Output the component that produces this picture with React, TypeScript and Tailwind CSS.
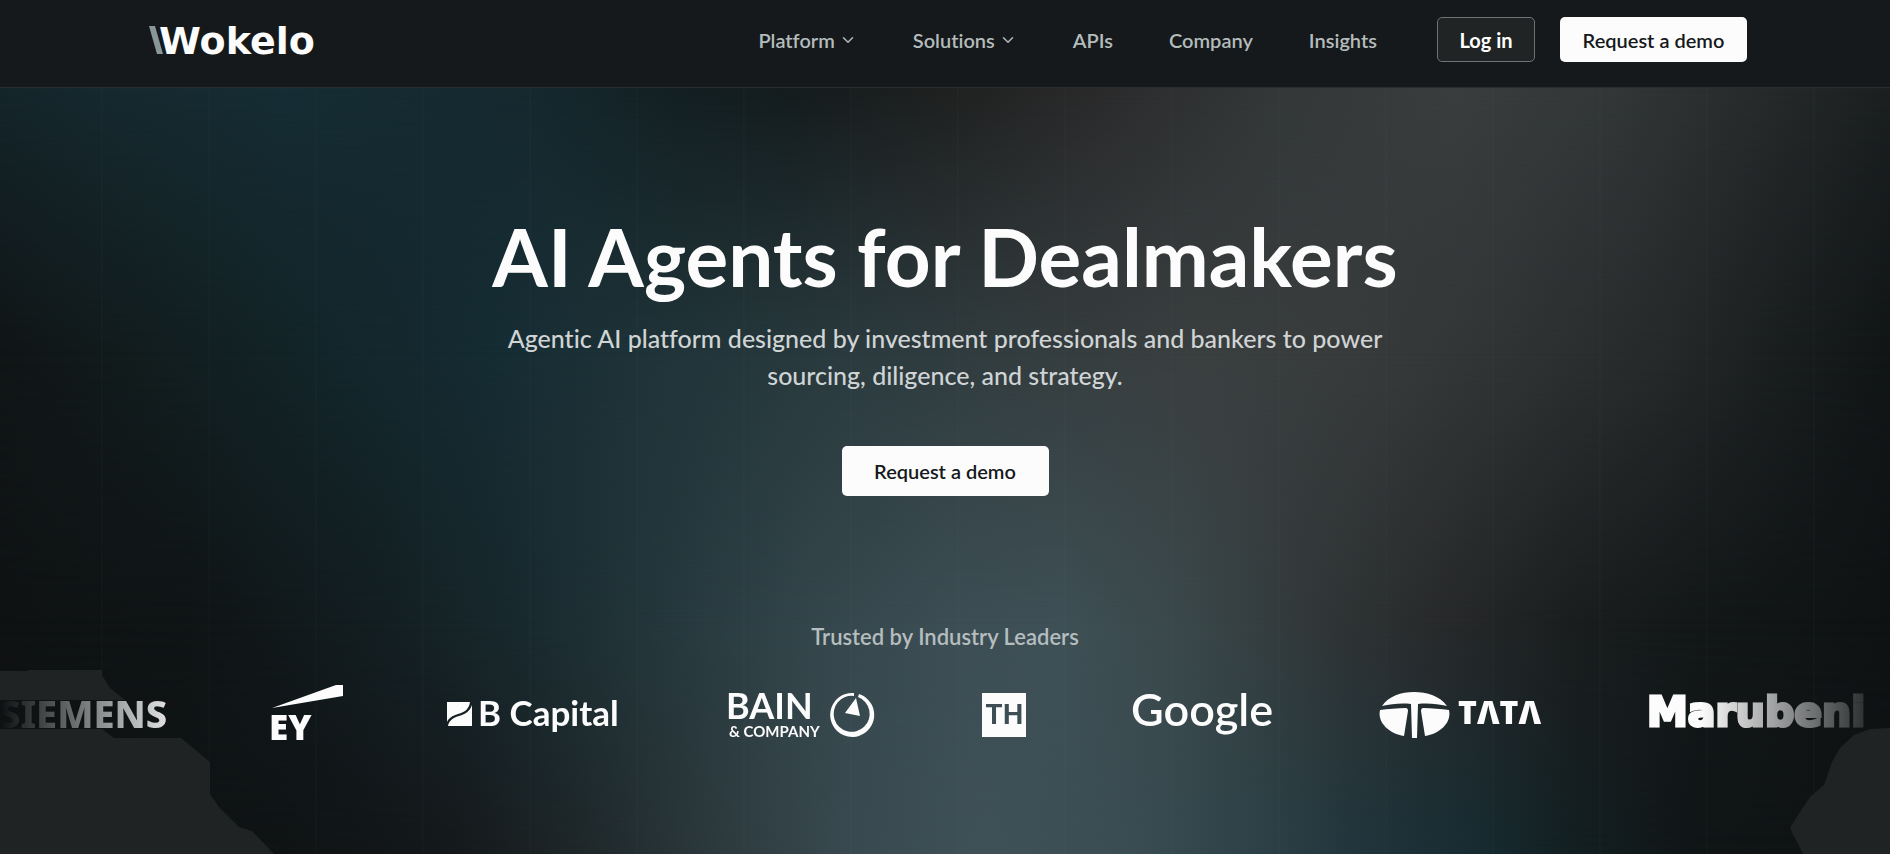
import type { ReactNode } from 'react';
import { ChevronDown } from 'lucide-react';

const navItems = [
  { label: 'Platform', hasMenu: true },
  { label: 'Solutions', hasMenu: true },
  { label: 'APIs', hasMenu: false },
  { label: 'Company', hasMenu: false },
  { label: 'Insights', hasMenu: false },
];

function WokeloLogo() {
  return (
    <svg className="h-10 w-[172px] overflow-visible" viewBox="0 0 172 40" role="img" aria-label="Wokelo">
      <path d="M0 6h6l8 28H8z" fill="#8a9799" />
      <text x="10" y="34" fontFamily="'DejaVu Sans', sans-serif" fontWeight="700" fontSize="38" fill="#fcfcfc">
        Wokelo
      </text>
    </svg>
  );
}

function Header() {
  return (
    <header className="relative z-10 border-b border-[#2a2c2d] bg-[#15191b]">
      <div className="mx-auto flex h-[87px] max-w-[1604px] items-start justify-between pt-[17px] pl-[6px]">
        <a href="#" className="mt-[3px] block">
          <WokeloLogo />
        </a>

        <div className="flex items-center">
          <nav className="flex items-center gap-14">
            {navItems.map((item) =>
              item.hasMenu ? (
                <button key={item.label} className="flex items-center gap-1 text-xl font-semibold text-[#b4bbbc]">
                  {item.label}
                  <ChevronDown className="h-[18px] w-[18px]" strokeWidth={2} />
                </button>
              ) : (
                <a key={item.label} href="#" className="text-xl font-semibold text-[#b4bbbc]">
                  {item.label}
                </a>
              )
            )}
          </nav>

          {/* Actions */}
          <div className="ml-[60px] flex gap-[25px]">
            <a
              href="#"
              className="flex h-[45px] w-[98px] items-center justify-center rounded-[5px] border border-[#6d7374] bg-[#202424] text-xl font-bold text-white"
            >
              Log in
            </a>
            <a
              href="#"
              className="flex h-[45px] w-[187px] items-center justify-center rounded-[5px] bg-[#fcfcfc] text-xl font-semibold text-[#15191b]"
            >
              Request a demo
            </a>
          </div>
        </div>
      </div>
    </header>
  );
}

// Four horizontal colour bands, each fading into the one below it
function Backdrop() {
  return (
    <div className="absolute inset-0 overflow-hidden" aria-hidden="true">
      <div className="absolute inset-0 bg-[linear-gradient(90deg,#0f1213_0%,#0f1314_15%,#15191b_24%,#1f282a_31%,#2d3a3e_38%,#394a50_45%,#3f5157_52%,#3a4d53_60%,#2c4147_67%,#20353c_72%,#172c32_78%,#132022_83%,#101516_90%,#0f1213_100%)]" />
      <div className="absolute inset-0 bg-[linear-gradient(90deg,#0f1213_0%,#0f1415_10%,#131e21_20%,#192a2f_28%,#27393e_36%,#34464b_43%,#3c4e54_50%,#3e5056_56%,#3a4749_63%,#303637_70%,#282a2b_76%,#1b1e1f_83%,#131718_90%,#0f1213_100%)] [mask-image:linear-gradient(180deg,#000_70%,transparent_100%)]" />
      <div className="absolute inset-0 bg-[linear-gradient(90deg,#101516_0%,#121d1e_8%,#13262b_18%,#152c33_26%,#203439_35%,#2b3b3f_45%,#343d3f_55%,#3a3f40_63%,#383b3c_72%,#303334_80%,#26292a_88%,#1a1e1f_94%,#111516_100%)] [mask-image:linear-gradient(180deg,#000_35%,transparent_70%)]" />
      <div className="absolute inset-0 bg-[linear-gradient(90deg,#14252a_0%,#16292f_6%,#152d34_15%,#15292f_28%,#131f22_36%,#141c1d_42%,#1f2020_50%,#2a2a2b_58%,#343839_68%,#3a3d3e_77%,#333738_85%,#292c2d_92%,#1b1f20_100%)] [mask-image:linear-gradient(180deg,#000_0%,transparent_35%)]" />
      <div className="absolute inset-0 bg-[repeating-linear-gradient(90deg,transparent_0px,transparent_101px,#ffffff06_102px,transparent_103px,transparent_107px)]" />
      <svg className="absolute bottom-0 left-0 h-[184px] w-[274px]" viewBox="0 0 274 184" fill="#202324">
        <path d="M0 1h28l1-1h73v5l8 13 15 12H0z" />
        <path d="M0 59h102l12 9h67l29 24v32l9 13 20 20 13 4 22 23H0z" />
      </svg>
      <svg className="absolute right-0 bottom-0 h-[126px] w-[100px]" viewBox="0 0 100 126" fill="#202324">
        <path d="M100 0 80 1 64 7 50 20 42 34 34 57 20 69 8 87 0 100l13 26h87z" />
      </svg>
    </div>
  );
}

function Logo({ label, className, viewBox, children }: { label: string; className: string; viewBox: string; children: ReactNode }) {
  return (
    <svg className={className} viewBox={viewBox} fill="#fcfcfc" role="img" aria-label={label}>
      {children}
    </svg>
  );
}

function LogoStrip() {
  return (
    <div className="flex items-center justify-center gap-[107px] overflow-hidden pr-2 pb-4 [mask-image:linear-gradient(90deg,transparent_0%,#000_10%,#000_90%,transparent_100%)] *:shrink-0 *:overflow-visible">
      <Logo label="Siemens" className="h-14 w-[169px]" viewBox="0 0 169 56">
        <text x="3" y="43" fontFamily="'Noto Sans', sans-serif" fontWeight="800" fontSize="38">
          SIEMENS
        </text>
      </Logo>

      <Logo label="EY" className="h-14 w-[71px]" viewBox="0 0 71 56">
        <path d="M0 23 64 0h7v11z" />
        <text x="-3" y="55" fontFamily="'Open Sans', sans-serif" fontWeight="800" fontSize="35">
          EY
        </text>
      </Logo>

      <Logo label="B Capital" className="h-14 w-[172px]" viewBox="3 0 172 56">
        <path d="M0 17h23c-1 7-5 10-12 12C5 31 2 33 0 37z" />
        <path d="M25 20v21H1c1-5 4-8 11-10s11-5 13-11z" />
        <text x="31" y="41" fontFamily="Lato, sans-serif" fontWeight="700" fontSize="35">
          B Capital
        </text>
      </Logo>

      <Logo label="Bain & Company" className="h-14 w-[146px]" viewBox="0 0 146 56">
        <text x="-3" y="34" fontFamily="Lato, sans-serif" fontWeight="700" fontSize="36">
          BAIN
        </text>
        <text x="0" y="52" fontFamily="Lato, sans-serif" fontWeight="700" fontSize="15">
          &amp; COMPANY
        </text>
        <path d="M125 8a22 22 0 1 0 5 1l-1 3a18 18 0 1 1-4-1z" />
        <path d="M127 13l4 18-15-3z" />
      </Logo>

      <Logo label="TH" className="h-14 w-11" viewBox="0 0 44 56">
        <path d="M0 8h44v44H0z" />
        <text x="22" y="39" textAnchor="middle" fontFamily="Inter, sans-serif" fontWeight="700" fontSize="27" fill="#3d4f55">
          TH
        </text>
      </Logo>

      <Logo label="Google" className="h-14 w-[139px]" viewBox="0 0 139 56">
        <text x="-2" y="41" fontFamily="Lato, sans-serif" fontWeight="600" fontSize="45">
          Google
        </text>
      </Logo>

      <Logo label="Tata" className="h-14 w-[165px]" viewBox="0 0 165 56">
        <path d="M3 21C10 11 22 7 35 7s26 4 33 14c-9-2-19-3-29-2l-1 34h-5l-1-34c-10-1-20 0-29 2z" />
        <path d="M1 25c8-1 17-2 26-2 1 0 2 1 2 3l-4 25C11 49-2 38 1 25z" />
        <path d="M70 25c-8-1-17-2-26-2-1 0-2 1-2 3l4 25c14-2 27-13 24-26z" />
        <text x="79" y="39" fontFamily="'Noto Sans', sans-serif" fontWeight="900" fontSize="32">
          TΛTΛ
        </text>
      </Logo>

      <Logo label="Marubeni" className="h-14 w-[236px]" viewBox="0 0 236 56">
        <text x="-4" y="41" fontFamily="'DejaVu Sans', sans-serif" fontWeight="700" fontSize="41" stroke="#fcfcfc" strokeWidth="3">
          Marubeni
        </text>
      </Logo>
    </div>
  );
}

export default function App() {
  return (
    <div className="flex min-h-screen flex-col bg-[#0f1314] font-['Lato',sans-serif] [font-variant-ligatures:none]">
      <Header />

      <main className="relative flex-1 pb-[94px]">
        <Backdrop />

        <div className="relative">
          <section className="mx-auto flex max-w-[960px] flex-col items-center pt-[120px] text-center">
            <h1 className="text-[80px] leading-24 font-bold whitespace-nowrap text-[#fcfcfc]">
              AI Agents for Dealmakers
            </h1>
            <p className="mt-4 max-w-[900px] text-[25px] leading-[37px] font-medium text-[#d0d4d5]">
              Agentic AI platform designed by investment professionals and bankers to power sourcing, diligence, and strategy.
            </p>
            <a
              href="#"
              className="mt-[52px] flex h-[50px] w-[207px] items-center justify-center rounded-[5px] bg-[#fcfcfc] text-xl font-semibold text-[#15191b]"
            >
              Request a demo
            </a>
          </section>

          <section className="mt-[125px]">
            <h2 className="mb-8 text-center text-[22px] leading-8 font-semibold text-[#b5bdbf]">
              Trusted by Industry Leaders
            </h2>
            <LogoStrip />
          </section>
        </div>
      </main>
    </div>
  );
}
